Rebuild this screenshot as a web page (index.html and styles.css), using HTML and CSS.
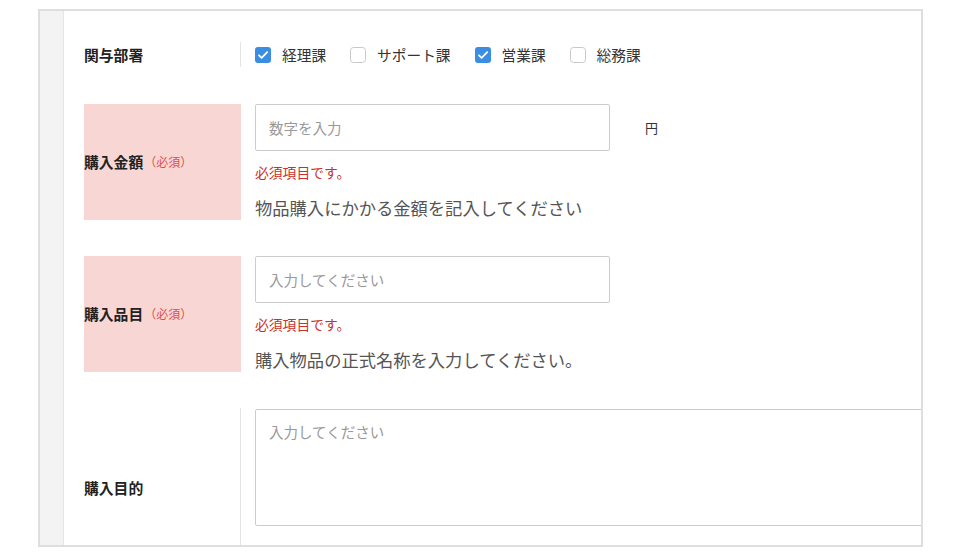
FILE: index.html
```html
<!DOCTYPE html>
<html lang="ja">
<head>
<meta charset="utf-8">
<link rel="stylesheet" href="styles.css">
</head>
<body>
<div class="page">
  <div class="panel">
    <div class="strip"></div>
    <div class="form">
      <div class="row row-dept">
        <div class="label">関与部署</div>
        <div class="content checks">
          <label class="check">
            <svg width="16" height="16" viewBox="0 0 16 16"><rect x="0" y="0" width="16" height="16" rx="3" fill="#3b8de2"/><path d="M4 8.3l2.6 2.6L12.2 5.2" stroke="#fff" stroke-width="1.8" fill="none" stroke-linecap="round" stroke-linejoin="round"/></svg>
            <span>経理課</span>
          </label>
          <label class="check">
            <svg width="16" height="16" viewBox="0 0 16 16"><rect x="0.5" y="0.5" width="15" height="15" rx="3" fill="#fff" stroke="#c8c8c8"/></svg>
            <span>サポート課</span>
          </label>
          <label class="check">
            <svg width="16" height="16" viewBox="0 0 16 16"><rect x="0" y="0" width="16" height="16" rx="3" fill="#3b8de2"/><path d="M4 8.3l2.6 2.6L12.2 5.2" stroke="#fff" stroke-width="1.8" fill="none" stroke-linecap="round" stroke-linejoin="round"/></svg>
            <span>営業課</span>
          </label>
          <label class="check">
            <svg width="16" height="16" viewBox="0 0 16 16"><rect x="0.5" y="0.5" width="15" height="15" rx="3" fill="#fff" stroke="#c8c8c8"/></svg>
            <span>総務課</span>
          </label>
        </div>
      </div>

      <div class="row">
        <div class="label err">購入金額<span class="req">（必須）</span></div>
        <div class="content">
          <div class="inline">
            <div class="input">数字を入力</div>
            <span class="unit">円</span>
          </div>
          <div class="error">必須項目です。</div>
          <div class="help">物品購入にかかる金額を記入してください</div>
        </div>
      </div>

      <div class="row">
        <div class="label err">購入品目<span class="req">（必須）</span></div>
        <div class="content">
          <div class="input">入力してください</div>
          <div class="error">必須項目です。</div>
          <div class="help">購入物品の正式名称を入力してください。</div>
        </div>
      </div>

      <div class="row row-last">
        <div class="label">購入目的</div>
        <div class="content">
          <div class="textarea">入力してください</div>
        </div>
      </div>
    </div>
  </div>
</div>
</body>
</html>
```

FILE: styles.css
```css
* { box-sizing: border-box; }

body {
  margin: 0;
  background: #ffffff;
  font-family: "Noto Sans CJK JP", "Noto Sans", sans-serif;
  color: #333;
}

.page {
  padding: 9px 0 0 38px;
}

.panel {
  width: 885px;
  height: 538px;
  border: 2px solid #dedede;
  display: flex;
  overflow: hidden;
  background: #fff;
}

.strip {
  width: 24px;
  flex: none;
  background: #f3f3f3;
  border-right: 1px solid #e6e6e6;
}

.form {
  flex: 1;
  min-width: 0;
  padding: 31px 0 0 20px;
  display: flex;
  flex-direction: column;
  gap: 36px;
}

.row {
  display: flex;
  flex: none;
}

.label {
  width: 157px;
  flex: none;
  display: flex;
  align-items: center;
  border-right: 1px solid #e4e4e4;
  font-size: 14.8px;
  font-weight: 700;
  color: #222;
  line-height: 20px;
}

.label.err {
  background: #f8d6d3;
  border-right-color: #f8d6d3;
}

.req {
  font-size: 12px;
  font-weight: 400;
  color: #d9534f;
  margin-left: 1px;
}

.content {
  flex: 1;
  min-width: 0;
  padding-left: 14px;
}

.row-dept {
  height: 25px;
  margin-bottom: 1px;
}

.checks {
  display: flex;
  align-items: center;
  gap: 24px;
}

.check {
  display: flex;
  align-items: center;
  gap: 11px;
  font-size: 14.7px;
  color: #333;
}

.check svg { display: block; }

.inline {
  display: flex;
  align-items: center;
}

.input {
  width: 355px;
  height: 47px;
  border: 1px solid #cccccc;
  border-radius: 2px;
  padding-left: 13px;
  display: flex;
  align-items: center;
  font-size: 14.5px;
  color: #999;
}

.unit {
  margin-left: 35px;
  font-size: 13px;
  color: #333;
}

.error {
  margin-top: 11px;
  line-height: 20px;
  font-size: 13.8px;
  color: #c9302c;
}

.help {
  margin-top: 14px;
  line-height: 24px;
  font-size: 17.3px;
  color: #555;
}

.row-last {
  height: 160px;
}

.textarea {
  margin-top: 1px;
  width: 700px;
  height: 117px;
  border: 1px solid #cccccc;
  border-radius: 2px;
  padding: 12px 13px;
  font-size: 14.5px;
  line-height: 20px;
  color: #999;
}
```
